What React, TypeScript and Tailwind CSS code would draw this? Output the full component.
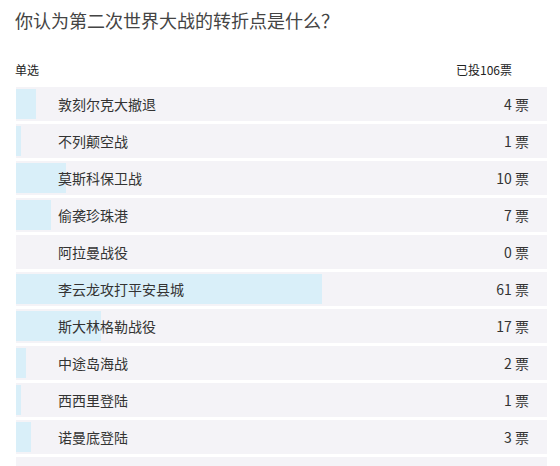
import React from 'react';

type Option = { label: string; votes: number };

const options: Option[] = [
  { label: '敦刻尔克大撤退', votes: 4 },
  { label: '不列颠空战', votes: 1 },
  { label: '莫斯科保卫战', votes: 10 },
  { label: '偷袭珍珠港', votes: 7 },
  { label: '阿拉曼战役', votes: 0 },
  { label: '李云龙攻打平安县城', votes: 61 },
  { label: '斯大林格勒战役', votes: 17 },
  { label: '中途岛海战', votes: 2 },
  { label: '西西里登陆', votes: 1 },
  { label: '诺曼底登陆', votes: 3 },
];

const total = 106;

export default function App() {
  return (
    <div
      className="w-[560px] h-[466px] overflow-hidden bg-white text-[#333]"
      style={{ fontFamily: '"Noto Sans CJK SC", "Liberation Sans", sans-serif' }}
    >
      <h1 className="pl-[15px] pt-[7px] text-[18px] leading-[26px] text-[#444] font-normal">
        你认为第二次世界大战的转折点是什么？
      </h1>

      <div className="flex justify-between items-center pl-[15px] pr-[48px] mt-[28px] text-[12px] leading-[18px] text-[#222]">
        <span>单选</span>
        <span>已投106票</span>
      </div>

      <div className="mt-[8px] ml-[16px] w-[531px] flex flex-col gap-[3px]">
        {options.map((opt) => (
          <div key={opt.label} className="relative h-[34px] bg-[#f4f3f7]">
            <div
              className="absolute left-0 top-[2px] bottom-[2px] bg-[#d9eff9]"
              style={{ width: `${(opt.votes / total) * 100}%` }}
            />
            <div className="relative flex items-center justify-between h-full pl-[42px] pr-[18px] text-[14px]">
              <span>{opt.label}</span>
              <span>{opt.votes} 票</span>
            </div>
          </div>
        ))}
        <div className="h-[34px] bg-[#f4f3f7]" />
      </div>
    </div>
  );
}
